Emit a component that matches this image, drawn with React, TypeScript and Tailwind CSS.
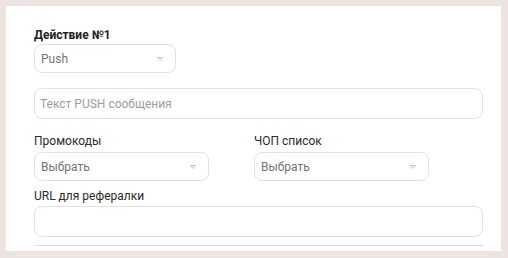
import React from 'react';

function Chevron() {
  return (
    <svg className="h-[4px] w-[6px]" viewBox="0 0 6 4" fill="none" aria-hidden="true">
      <path d="M0.5 0.5h5L3 3.5z" stroke="#c2c2c2" strokeWidth="1" strokeLinejoin="round" />
    </svg>
  );
}

function Select({ value, className }: { value: string; className: string }) {
  return (
    <div
      className={`flex h-[29px] items-center justify-between rounded-[8px] border border-[#e2e2e2] bg-white pl-[6px] pr-[12px] text-[12px] text-[#737373] ${className}`}
    >
      <span>{value}</span>
      <Chevron />
    </div>
  );
}

function Input({ placeholder }: { placeholder?: string }) {
  return (
    <div className="flex h-[31px] w-[449px] items-center rounded-[8px] border border-[#e2e2e2] bg-white px-[5px] text-[12px] text-[#9c9c9c]">
      {placeholder}
    </div>
  );
}

export default function App() {
  return (
    <div className="h-[258px] w-[508px] bg-[#ede4e2] p-[6px] pr-[7px] font-['Roboto',sans-serif]">
      <div className="flex h-[245px] w-[495px] flex-col bg-white pl-[28px] pt-[21px]">
        <div className="h-[17px] text-[12px] font-bold leading-[17px] text-[#222]">Действие №1</div>
        <Select value="Push" className="w-[142px]" />
        <div className="mt-[15px]">
          <Input placeholder="Текст PUSH сообщения" />
        </div>

        <div className="mt-[14px] grid w-[449px] grid-cols-[220px_1fr]">
          <div className="flex flex-col">
            <div className="h-[19px] text-[12px] leading-[17px] text-[#2a2a2a]">Промокоды</div>
            <Select value="Выбрать" className="w-[175px]" />
          </div>
          <div className="flex flex-col">
            <div className="h-[19px] text-[12px] leading-[17px] text-[#2a2a2a]">ЧОП список</div>
            <Select value="Выбрать" className="w-[175px]" />
          </div>
        </div>

        <div className="mt-[7px] h-[18px] text-[12px] leading-[17px] text-[#2a2a2a]">URL для рефералки</div>
        <Input />
        <div className="mt-[8px] h-px w-[449px] bg-[#dcdcdc]" />
      </div>
    </div>
  );
}
